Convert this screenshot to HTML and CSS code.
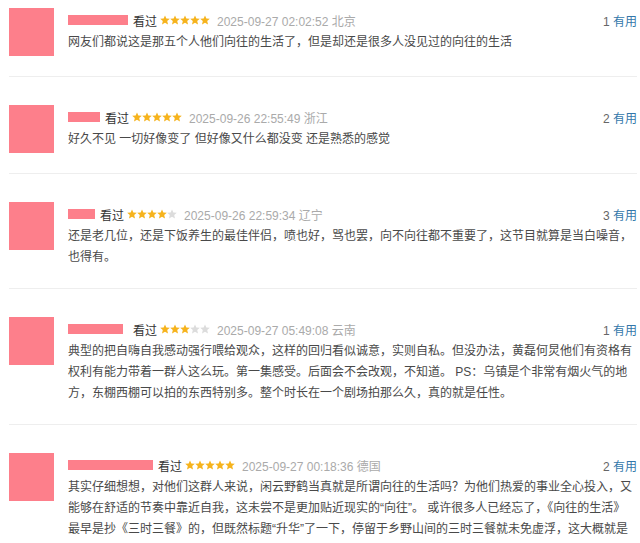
FILE: index.html
```html
<!DOCTYPE html>
<html lang="zh-CN">
<head>
    <meta charset="UTF-8">
    <meta name="viewport" content="width=device-width, initial-scale=1.0">
    <title>短评</title>
    <link rel="stylesheet" href="styles.css">
</head>
<body>
    <svg width="0" height="0" class="defs">
        <defs>
            <polygon id="star" points="5,0.4 6.35,3.6 9.8,3.85 7.2,6.1 8,9.5 5,7.7 2,9.5 2.8,6.1 0.2,3.85 3.65,3.6"/>
        </defs>
    </svg>

    <div class="comments">
        <div class="comment">
            <div class="avatar"></div>
            <div class="comment-body">
                <div class="comment-info">
                    <span class="name" style="width:60px"></span>
                    <span class="watched">看过</span>
                    <span class="stars">
                        <svg class="on"><use href="#star"/></svg><svg class="on"><use href="#star"/></svg><svg class="on"><use href="#star"/></svg><svg class="on"><use href="#star"/></svg><svg class="on"><use href="#star"/></svg>
                    </span>
                    <span class="time">2025-09-27 02:02:52 北京</span>
                    <span class="votes"><span class="count">1</span> <a href="#">有用</a></span>
                </div>
                <p class="comment-text">网友们都说这是那五个人他们向往的生活了，但是却还是很多人没见过的向往的生活</p>
            </div>
        </div>

        <div class="comment">
            <div class="avatar"></div>
            <div class="comment-body">
                <div class="comment-info">
                    <span class="name" style="width:32px"></span>
                    <span class="watched">看过</span>
                    <span class="stars">
                        <svg class="on"><use href="#star"/></svg><svg class="on"><use href="#star"/></svg><svg class="on"><use href="#star"/></svg><svg class="on"><use href="#star"/></svg><svg class="on"><use href="#star"/></svg>
                    </span>
                    <span class="time">2025-09-26 22:55:49 浙江</span>
                    <span class="votes"><span class="count">2</span> <a href="#">有用</a></span>
                </div>
                <p class="comment-text">好久不见 一切好像变了 但好像又什么都没变 还是熟悉的感觉</p>
            </div>
        </div>

        <div class="comment">
            <div class="avatar"></div>
            <div class="comment-body">
                <div class="comment-info">
                    <span class="name" style="width:27px"></span>
                    <span class="watched">看过</span>
                    <span class="stars">
                        <svg class="on"><use href="#star"/></svg><svg class="on"><use href="#star"/></svg><svg class="on"><use href="#star"/></svg><svg class="on"><use href="#star"/></svg><svg class="off"><use href="#star"/></svg>
                    </span>
                    <span class="time">2025-09-26 22:59:34 辽宁</span>
                    <span class="votes"><span class="count">3</span> <a href="#">有用</a></span>
                </div>
                <p class="comment-text">还是老几位，还是下饭养生的最佳伴侣，喷也好，骂也罢，向不向往都不重要了，这节目就算是当白噪音，也得有。</p>
            </div>
        </div>

        <div class="comment">
            <div class="avatar"></div>
            <div class="comment-body">
                <div class="comment-info">
                    <span class="name" style="width:55px"></span>
                    <span class="watched wide">看过</span>
                    <span class="stars">
                        <svg class="on"><use href="#star"/></svg><svg class="on"><use href="#star"/></svg><svg class="on"><use href="#star"/></svg><svg class="off"><use href="#star"/></svg><svg class="off"><use href="#star"/></svg>
                    </span>
                    <span class="time">2025-09-27 05:49:08 云南</span>
                    <span class="votes"><span class="count">1</span> <a href="#">有用</a></span>
                </div>
                <p class="comment-text">典型的把自嗨自我感动强行喂给观众，这样的回归看似诚意，实则自私。但没办法，黄磊何炅他们有资格有权利有能力带着一群人这么玩。第一集感受。后面会不会改观，不知道。 PS：乌镇是个非常有烟火气的地方，东棚西棚可以拍的东西特别多。整个时长在一个剧场拍那么久，真的就是任性。</p>
            </div>
        </div>

        <div class="comment">
            <div class="avatar"></div>
            <div class="comment-body">
                <div class="comment-info">
                    <span class="name" style="width:85px"></span>
                    <span class="watched">看过</span>
                    <span class="stars">
                        <svg class="on"><use href="#star"/></svg><svg class="on"><use href="#star"/></svg><svg class="on"><use href="#star"/></svg><svg class="on"><use href="#star"/></svg><svg class="on"><use href="#star"/></svg>
                    </span>
                    <span class="time">2025-09-27 00:18:36 德国</span>
                    <span class="votes"><span class="count">2</span> <a href="#">有用</a></span>
                </div>
                <p class="comment-text">其实仔细想想，对他们这群人来说，闲云野鹤当真就是所谓向往的生活吗？为他们热爱的事业全心投入，又能够在舒适的节奏中靠近自我，这未尝不是更加贴近现实的“向往”。 或许很多人已经忘了，《向往的生活》最早是抄《三时三餐》的，但既然标题“升华”了一下，停留于乡野山间的三时三餐就未免虚浮，这大概就是导演一开始所说的“标准答案”。我喜欢这一季对“向往的生活”作出的新解注，更真诚。作为一个纯综艺观众，</p>
            </div>
        </div>
    </div>
</body>
</html>
```

FILE: styles.css
```css
body {
    margin: 0;
    padding: 0 3px 0 9px;
    background: #fff;
    font-family: "Liberation Sans", "Noto Sans CJK SC", sans-serif;
    font-size: 12px;
    color: #494949;
}
.defs {
    position: absolute;
}
.comment {
    display: flex;
    gap: 14px;
    padding: 28px 0 20px;
    border-bottom: 1px solid #eee;
}
.comment:first-child {
    padding-top: 8px;
}
.avatar {
    flex: none;
    width: 45px;
    height: 48px;
    background-color: #fd7f8b;
}
.comment-body {
    flex: 1;
    min-width: 0;
}
.comment-info {
    display: flex;
    align-items: center;
    height: 24px;
    white-space: nowrap;
}
.name {
    display: inline-block;
    height: 10px;
    background-color: #fd7f8b;
    margin-right: 5px;
}
.watched {
    color: #333;
    margin-right: 3px;
}
.watched.wide {
    margin-left: 5px;
}
.stars {
    display: flex;
    margin-right: 7px;
}
.stars svg {
    width: 10px;
    height: 10px;
}
.stars .on {
    fill: #f6b31c;
}
.stars .off {
    fill: #dcdcdc;
}
.time {
    color: #aaa;
}
.votes {
    margin-left: auto;
    color: #666;
}
.votes a {
    color: #3377aa;
    text-decoration: none;
}
.comment-text {
    margin: 0;
    line-height: 21px;
    color: #494949;
}
```
